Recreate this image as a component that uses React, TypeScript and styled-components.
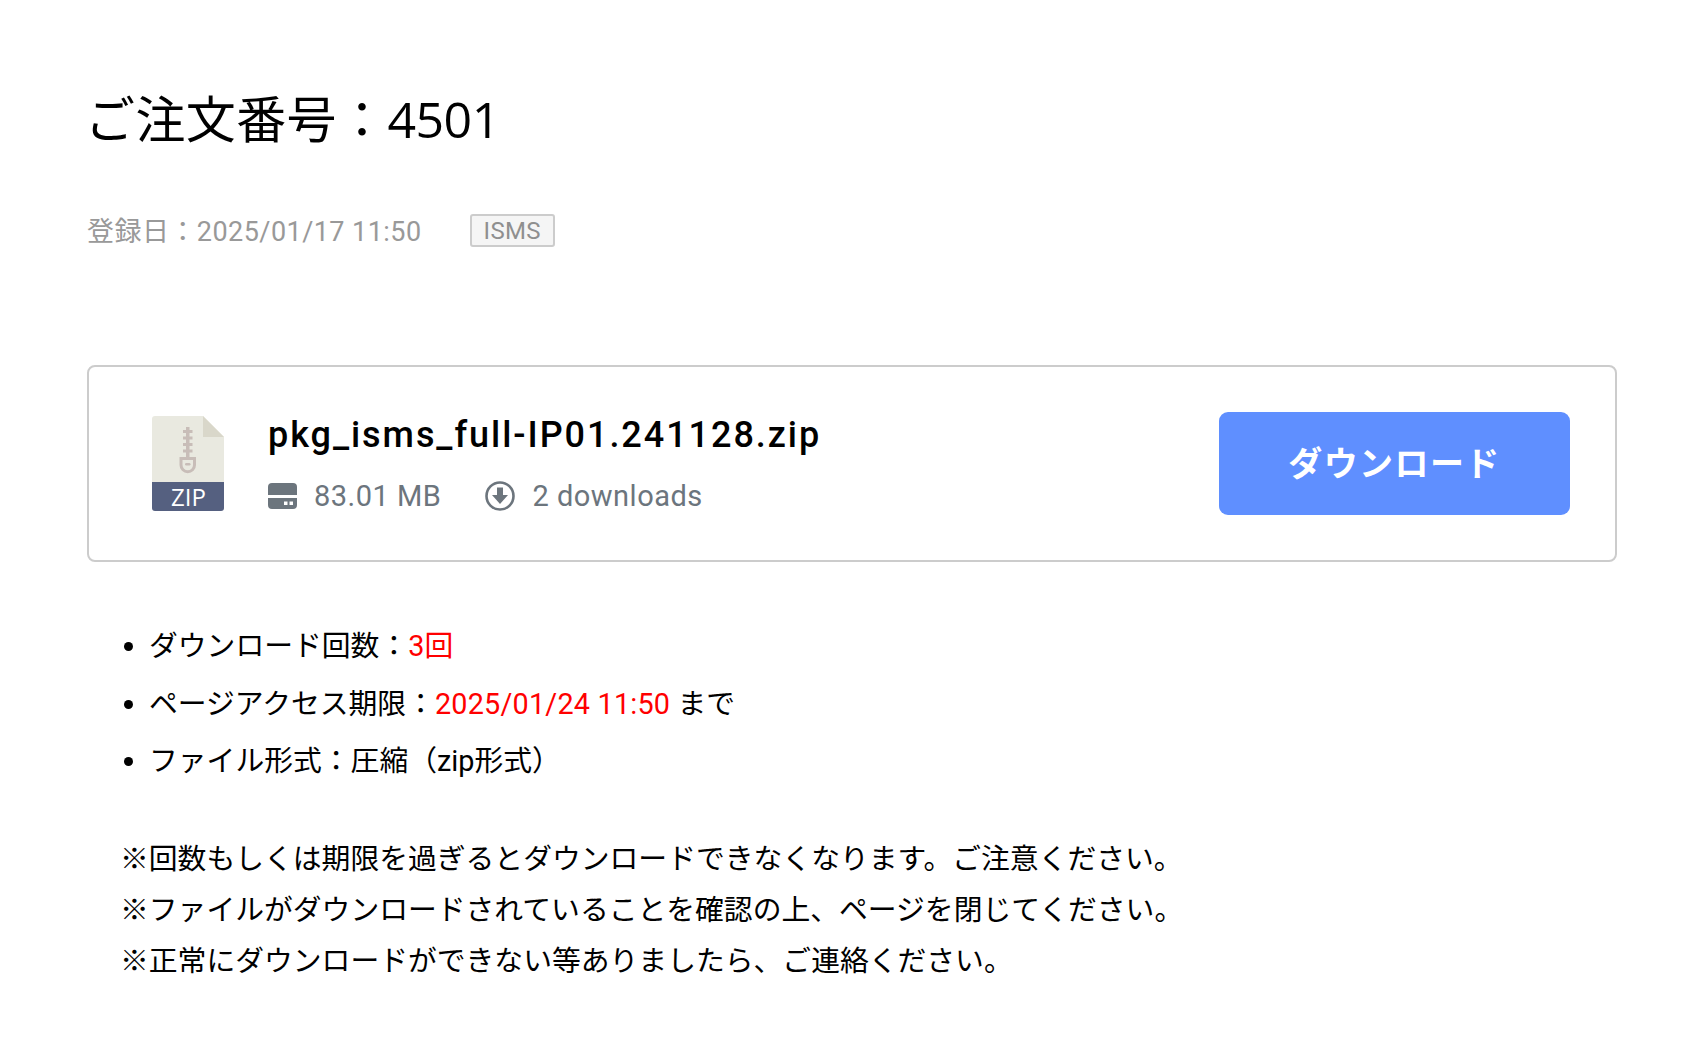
import React from "react";
import styled, { createGlobalStyle } from "styled-components";

const GlobalStyle = createGlobalStyle`
  html, body { margin: 0; padding: 0; background: #fff; }
  body { font-family: Roboto, "Noto Sans CJK JP", sans-serif; color: #000; }
`;

const Page = styled.main`
  width: 1701px;
  height: 1062px;
  box-sizing: border-box;
  padding: 84px 84px 0 87px;
  overflow: hidden;
`;

const Title = styled.h1`
  margin: 0 0 0 -2px;
  font-family: "Open Sans", "Noto Sans CJK JP", sans-serif;
  font-size: 50px;
  line-height: 70px;
  font-weight: 400;
  letter-spacing: 0.4px;
  color: #000;
`;

const OrderNumber = styled.span`
  letter-spacing: -0.5px;
`;

const Meta = styled.div`
  display: flex;
  align-items: center;
  gap: 48px;
  margin-top: 53px;
  height: 44px;
  font-size: 27px;
  letter-spacing: 0.45px;
  color: #999;
`;

const Tag = styled.span`
  box-sizing: border-box;
  height: 33px;
  margin-top: 2px;
  padding: 2px 12px 0;
  display: flex;
  align-items: center;
  font-size: 24px;
  letter-spacing: 0.3px;
  color: #8f8f8f;
  background: #f5f5f5;
  border: 2px solid #ccc;
  border-radius: 3px;
`;

const Card = styled.section`
  box-sizing: border-box;
  width: 1530px;
  height: 197px;
  margin-top: 114px;
  padding: 0 45px 0 63px;
  display: flex;
  align-items: center;
  background: #fff;
  border: 2px solid #ccc;
  border-radius: 8px;
`;

const FileIconSvg = styled.svg`
  flex: none;
  display: block;
  margin-right: 44px;
`;

const FileInfo = styled.div`
  flex: 1;
  display: flex;
  flex-direction: column;
  gap: 17px;
`;

const FileName = styled.div`
  font-size: 36px;
  line-height: 48px;
  font-weight: 500;
  letter-spacing: 1.95px;
  color: #000;
`;

const Stats = styled.div`
  display: flex;
  align-items: center;
  gap: 44px;
`;

const Stat = styled.span`
  display: flex;
  align-items: center;
  gap: 17px;
  font-size: 29px;
  line-height: 40px;
  letter-spacing: 0.5px;
  color: #6c757d;
`;

const DownloadButton = styled.button`
  flex: none;
  width: 351px;
  height: 103px;
  padding: 0 0 4px;
  border: 0;
  border-radius: 9px;
  background: #5f8fff;
  color: #fff;
  font-family: Roboto, "Noto Sans CJK JP", sans-serif;
  font-size: 34px;
  font-weight: 700;
  letter-spacing: 1.4px;
`;

const Details = styled.ul`
  margin: 56px 0 0;
  padding: 0 0 0 62px;
  font-size: 28.8px;
  line-height: 57.6px;
  color: #000;
`;

const Red = styled.span`
  color: #f00;
  letter-spacing: 0.2px;
`;

const Notes = styled.div`
  margin: 43px 0 0 33px;
  font-size: 28.8px;
  line-height: 51.2px;
  color: #000;
`;

const Note = styled.p`
  margin: 0;
`;

const FileIcon = () => (
  <FileIconSvg width="72" height="95" viewBox="0 0 72 95" aria-hidden="true">
    <path d="M3 0H51L72 21V66H0V3a3 3 0 0 1 3-3Z" fill="#e9e9e0" />
    <path d="M51 0L72 21H51Z" fill="#d9d7ca" />
    <path d="M0 66H72V92a3 3 0 0 1-3 3H3a3 3 0 0 1-3-3Z" fill="#556080" />
    <g fill="#c8bdb8">
      <rect x="34" y="11" width="3.5" height="30" />
      <rect x="31" y="14" width="9.5" height="3" />
      <rect x="31" y="20.5" width="9.5" height="3" />
      <rect x="31" y="27" width="9.5" height="3" />
      <rect x="31" y="33.5" width="9.5" height="3" />
    </g>
    <path d="M29 42.5H42.5V49a6.75 6.75 0 0 1-13.5 0Z" fill="none" stroke="#c8bdb8" strokeWidth="3" />
    <rect x="33" y="47" width="5.5" height="2.5" rx="1.25" fill="#c8bdb8" />
    <text x="36.5" y="89.5" textAnchor="middle" fill="#fff" fontFamily="'Open Sans', sans-serif" fontSize="24" fontWeight="500">ZIP</text>
  </FileIconSvg>
);

const DriveIcon = () => (
  <svg width="29" height="26" viewBox="0 0 29 26" aria-hidden="true">
    <path d="M4 0H25a4 4 0 0 1 4 4V12H0V4a4 4 0 0 1 4-4Z" fill="#6c757d" />
    <path fillRule="evenodd" d="M0 15H29V22a4 4 0 0 1-4 4H4a4 4 0 0 1-4-4ZM16 18.5h3.5v3.5H16ZM21.5 18.5H25v3.5h-3.5Z" fill="#6c757d" />
  </svg>
);

const DownIcon = () => (
  <svg width="30" height="30" viewBox="0 0 30 30" aria-hidden="true">
    <circle cx="15" cy="15" r="13.5" fill="none" stroke="#6c757d" strokeWidth="2.6" />
    <path d="M12 6.5h6V14h5L15 23 7 14h5Z" fill="#6c757d" />
  </svg>
);

export default function App() {
  return (
    <>
      <GlobalStyle />
      <Page>
        <Title>ご注文番号：<OrderNumber>4501</OrderNumber></Title>
        <Meta>
          <span>登録日：2025/01/17 11:50</span>
          <Tag>ISMS</Tag>
        </Meta>
        <Card>
          <FileIcon />
          <FileInfo>
            <FileName>pkg_isms_full-IP01.241128.zip</FileName>
            <Stats>
              <Stat><DriveIcon />83.01 MB</Stat>
              <Stat><DownIcon />2 downloads</Stat>
            </Stats>
          </FileInfo>
          <DownloadButton>ダウンロード</DownloadButton>
        </Card>
        <Details>
          <li>ダウンロード回数：<Red>3回</Red></li>
          <li>ページアクセス期限：<Red>2025/01/24 11:50</Red> まで</li>
          <li>ファイル形式：圧縮（zip形式）</li>
        </Details>
        <Notes>
          <Note>※回数もしくは期限を過ぎるとダウンロードできなくなります。ご注意ください。</Note>
          <Note>※ファイルがダウンロードされていることを確認の上、ページを閉じてください。</Note>
          <Note>※正常にダウンロードができない等ありましたら、ご連絡ください。</Note>
        </Notes>
      </Page>
    </>
  );
}
